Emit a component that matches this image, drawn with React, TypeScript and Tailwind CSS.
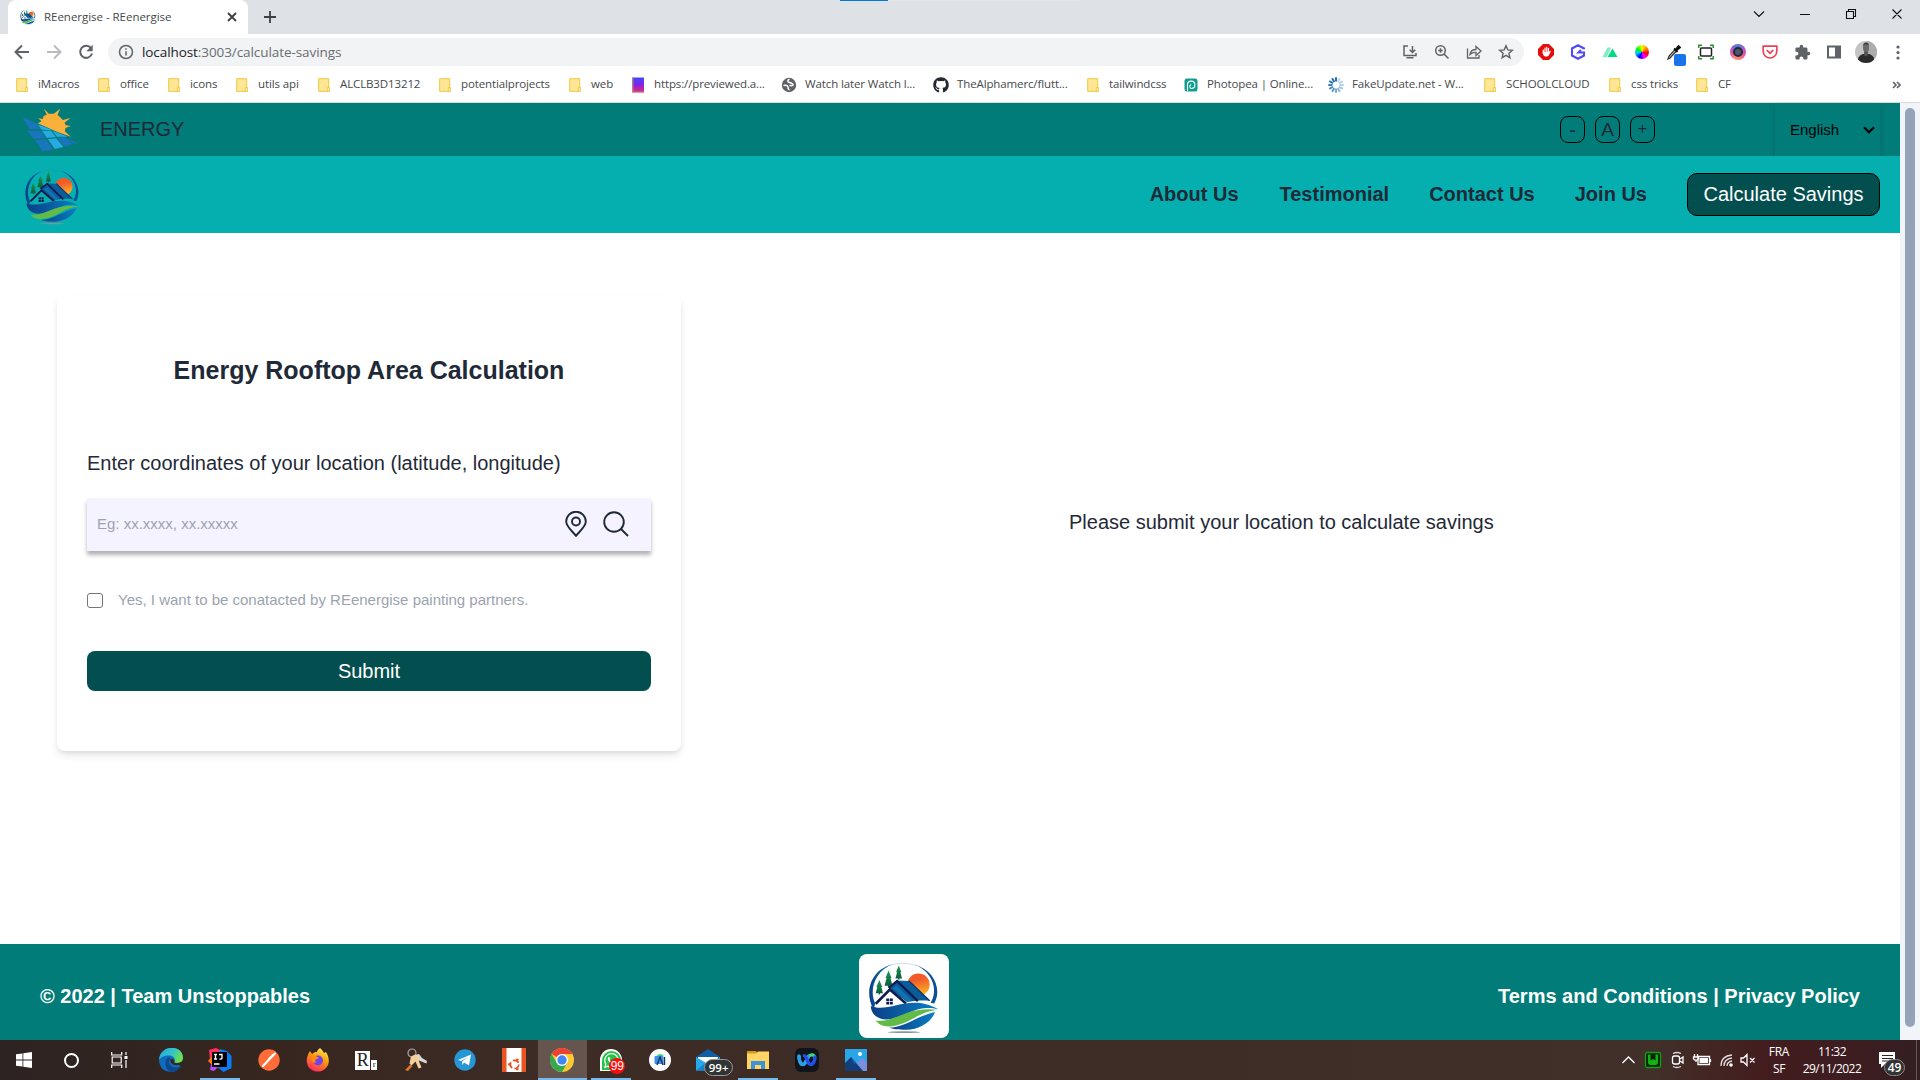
import React from "react";
import { FaGithub, FaWhatsapp } from "react-icons/fa";
import { MdExtension } from "react-icons/md";

const HouseLogo = ({ className }: { className?: string }) => (
  <svg viewBox="90 60 212 222" className={className}>
    <defs>
      <linearGradient id="sunG" x1="0.3" y1="0" x2="0.5" y2="1">
        <stop offset="0.3" stopColor="#f15a29" />
        <stop offset="1" stopColor="#fdb827" />
      </linearGradient>
      <linearGradient id="blueG" x1="0" y1="0" x2="1" y2="0">
        <stop offset="0" stopColor="#0a3f86" />
        <stop offset="1" stopColor="#0b7fc4" />
      </linearGradient>
      <linearGradient id="treeG" x1="0" y1="0" x2="0" y2="1">
        <stop offset="0" stopColor="#1a9a50" />
        <stop offset="1" stopColor="#0a5a3c" />
      </linearGradient>
    </defs>
    <path d="M150 74C175 65 210 65 238 75" fill="none" stroke="#3a7fae" strokeWidth="1.2" opacity=".6" />
    <path d="M160 71C100 84 72 150 103 206L109 190C88 150 108 90 160 71z" fill="url(#blueG)" />
    <path d="M228 71C288 88 312 146 288 189L277 187C302 146 281 92 228 71z" fill="#0b4f96" />
    <circle cx="240" cy="132" r="34" fill="url(#sunG)" />
    <g fill="url(#treeG)">
      <path d="M121 118l-9 21h3l-5 19h9v4h4v-4h9l-5-19h3z" />
      <path d="M149 89l-9 23h3l-6 23h10v5h4v-5h10l-6-23h3z" />
      <path d="M180 74l-8 20h3l-5 19h8v3h4v-3h8l-5-19h3z" />
    </g>
    <path d="M148 141L174 119L212 121L274 181C250 178 225 181 204 184z" fill="#0c5c9a" />
    <path d="M110 190L153 147L202 189" fill="none" stroke="#0d1d52" strokeWidth="8" />
    <path d="M150 142L175 121L238 182" fill="none" stroke="#0d1d52" strokeWidth="7" />
    <path d="M162 141L176 136L220 182L206 184z" fill="#1273b2" />
    <path d="M211 121L274 181" stroke="#0d3468" strokeWidth="4" />
    <path d="M142 174h9v8h-9zM153 174h9v8h-9zM142 184h9v8h-9zM153 184h9v8h-9z" fill="#0d1d52" />
    <path d="M95 197C150 220 215 157 300 207C230 190 200 236 142 238C112 236 96 220 95 197z" fill="url(#blueG)" />
    <path d="M110 241C165 250 208 195 299 209C240 212 214 254 153 259C131 260 118 252 110 241z" fill="#62bb46" />
    <path d="M152 263C202 260 234 228 290 215C282 245 240 270 202 269C178 269 162 267 152 263z" fill="url(#blueG)" />
    <ellipse cx="196" cy="276.500" rx="48" ry="2.500" fill="#8a9399" />
  </svg>
);

const SolarLogo = () => (
  <svg viewBox="66 22 170 132" className="h-[44px] w-[57px]">
    <path
      d="M113 68L124 62L114 53L128 55L130 46L140 42L131 24L146 39L161 39L180 24L172 42L180 50L188 58L211 52L193 66L197 74L212 76L196 82L194 92L212 108L170 93z"
      fill="#fbb03b"
    />
    <g fill="#1b75bc">
      <path d="M67 48L110 69L119 86L88 86z" />
      <path d="M80 90H122L136 112L102 115z" />
      <path d="M105 118L138 116L159 147L127 152z" />
      <path d="M172 112L196 110L219 130L194 138z" />
      <path d="M200 111L234 128L222 129z" />
    </g>
    <g fill="#27aae1">
      <path d="M113 71L158 89L124 87z" />
      <path d="M126 90L152 90L167 109L140 112z" />
      <path d="M143 116L168 113L190 139L164 145z" />
      <path d="M156 91L166 94L204 108L171 108z" />
    </g>
  </svg>
);

const Folder = () => (
  <svg viewBox="0 0 16 16" className="h-4 w-4">
    <path d="M2.700 1.700h10v12.600h-10z" fill="#ffe694" stroke="#edc843" strokeWidth="1" />
    <path d="M11.300 10.500h2.200v4h-2.200z" fill="#ffe694" stroke="#edc843" strokeWidth=".8" />
  </svg>
);

const Globe = () => (
  <svg viewBox="0 0 16 16" className="h-4 w-4">
    <circle cx="8" cy="8" r="7.200" fill="#5f6368" />
    <path d="M8.500 2.200C6 3 6.500 5 8.500 5.500s3.500 1 3.500 2.300-2 .7-3.500.7M2.500 8.500c2-.5 4 0 4.500 1.500s-.5 2.500 1.500 2.800" fill="none" stroke="#fff" strokeWidth="1.500" />
  </svg>
);

const Preview = () => (
  <svg viewBox="0 0 16 16" className="h-4 w-4">
    <defs>
      <linearGradient id="pv" x1="0" y1="0" x2="0" y2="1">
        <stop offset="0" stopColor="#3a4bff" />
        <stop offset=".5" stopColor="#8a1fe0" />
        <stop offset="1" stopColor="#e0307a" />
      </linearGradient>
    </defs>
    <path d="M2 .5h12v15H2z" fill="url(#pv)" />
    <path d="M2 .5h1.500v15H2zM2 14.500h12v1H2z" fill="#c0a070" opacity=".7" />
  </svg>
);

const Pea = () => (
  <svg viewBox="0 0 16 16" className="h-4 w-4">
    <rect x="1.500" y="1.500" width="13" height="13" rx="2.500" fill="#0e9e8e" />
    <path d="M4.500 14V8a3.700 3.700 0 1 1 4 3.500C6.500 11.500 6 8 8.300 7.500" fill="none" stroke="#fff" strokeWidth="1.100" />
  </svg>
);

const Spinner = () => (
  <svg viewBox="0 0 16 16" className="h-4 w-4">
    {[1, 0.25, 0.3, 0.35, 0.4, 0.5, 0.6, 0.7, 0.8, 0.9, 0.95, 1].map((o, i) => (
      <path key={i} d="M8 .3V4.500" stroke="#1769b5" strokeWidth="1.900" opacity={o} transform={`rotate(${i * 30} 8 8)`} />
    ))}
  </svg>
);

const bookmarks: { w: string; t: string; i: React.ReactNode }[] = [
  { w: "w-[82px]", t: "iMacros", i: <Folder /> },
  { w: "w-[70px]", t: "office", i: <Folder /> },
  { w: "w-[68px]", t: "icons", i: <Folder /> },
  { w: "w-[82px]", t: "utils api", i: <Folder /> },
  { w: "w-[121px]", t: "ALCLB3D13212", i: <Folder /> },
  { w: "w-[130px]", t: "potentialprojects", i: <Folder /> },
  { w: "w-[63px]", t: "web", i: <Folder /> },
  { w: "w-[151px]", t: "https://previewed.a...", i: <Preview /> },
  { w: "w-[152px]", t: "Watch later Watch l...", i: <Globe /> },
  { w: "w-[152px]", t: "TheAlphamerc/flutt...", i: <FaGithub className="h-4 w-4 text-[#24292f]" /> },
  { w: "w-[98px]", t: "tailwindcss", i: <Folder /> },
  { w: "w-[145px]", t: "Photopea | Online...", i: <Pea /> },
  { w: "w-[154px]", t: "FakeUpdate.net - W...", i: <Spinner /> },
  { w: "w-[125px]", t: "SCHOOLCLOUD", i: <Folder /> },
  { w: "w-[87px]", t: "css tricks", i: <Folder /> },
  { w: "w-[60px]", t: "CF", i: <Folder /> },
];

const G = "#5f6368";

const TabStrip = () => (
  <div className="relative flex h-[34px] bg-[#dee1e6] pr-[10px] pl-2">
    <div className="relative flex w-60 items-center rounded-t-lg bg-white pr-[11px] pl-3">
      <HouseLogo className="h-4 w-4" />
      <span className="ml-2 flex-1 whitespace-nowrap text-[11.500px] tracking-[-0.03px] text-[#45494d]">REenergise - REenergise</span>
      <svg viewBox="0 0 10 10" className="h-[10px] w-[10px]">
        <path d="M1 1l8 8M9 1l-8 8" stroke="#3c4043" strokeWidth="1.800" />
      </svg>
    </div>
    <svg viewBox="0 0 12 12" className="mt-[11px] ml-[16px] h-3 w-3">
      <path d="M6 0v12M0 6h12" stroke="#3c4043" strokeWidth="1.800" />
    </svg>
    <div className="absolute top-0 left-[840px] flex h-px w-[240px] bg-[#e6e6e6]">
      <div className="w-12 bg-[#0078d7]" />
    </div>
    <svg viewBox="0 0 160 20" className="mt-1 ml-auto h-5 w-[160px]" fill="none" stroke="#111" strokeWidth="1.100">
      <path d="M4 7.500l5 5 5-5M50 10.500h10M96.500 7.500h7v7h-7zM98.500 7.500v-2h7v7h-2M142.500 5.500l9 9M151.500 5.500l-9 9" />
    </svg>
  </div>
);

const Cell = ({ children }: { children: React.ReactNode }) => (
  <div className="flex h-8 w-8 shrink-0 items-center justify-center">{children}</div>
);

const Toolbar = () => (
  <div className="flex h-[36px] items-center bg-white pl-[6px]">
    <Cell>
      <svg viewBox="0 0 16 16" className="h-4 w-4" fill="none" stroke={G} strokeWidth="2">
        <path d="M15 8H2M8 1.500L1.500 8L8 14.500" />
      </svg>
    </Cell>
    <Cell>
      <svg viewBox="0 0 16 16" className="h-4 w-4" fill="none" stroke="#b9bbbe" strokeWidth="2">
        <path d="M1 8h13M8 1.500L14.500 8L8 14.500" />
      </svg>
    </Cell>
    <Cell>
      <svg viewBox="0 0 16 16" className="h-4 w-4">
        <path d="M13 4.200A6 6 0 1 0 14 9.500" fill="none" stroke={G} strokeWidth="2" />
        <path d="M14.700 .8v6.400H8.300z" fill={G} />
      </svg>
    </Cell>
    <div className="ml-[6px] flex h-7 w-[1416px] items-center rounded-full bg-[#f1f3f4] pr-[2px] pl-[10px]">
      <svg viewBox="0 0 16 16" className="h-4 w-4" fill="none" stroke={G} strokeWidth="1.500">
        <circle cx="8" cy="8" r="6.500" />
        <path d="M8 7.200v4.300M8 4.300v1.500" />
      </svg>
      <span className="ml-2 flex-1 text-[13.500px] tracking-[-0.08px] text-[#6a6e73]">
        <span className="text-[#202124]">localhost</span>:3003/calculate-savings
      </span>
      <Cell>
        <svg viewBox="0 0 16 16" className="h-4 w-4" fill="none" stroke={G} strokeWidth="1.500">
          <path d="M6 2H2v9.500h12V9M10.500 2v6M7.700 5.700l2.800 2.800 2.800-2.800M4.500 13.800h7" />
        </svg>
      </Cell>
      <Cell>
        <svg viewBox="0 0 16 16" className="h-4 w-4" fill="none" stroke={G} strokeWidth="1.500">
          <circle cx="6.500" cy="6.500" r="4.800" />
          <path d="M10 10l4.500 4.500M6.500 4.200v4.600M4.200 6.500h4.600" />
        </svg>
      </Cell>
      <Cell>
        <svg viewBox="0 0 16 16" className="h-4 w-4" fill="none" stroke={G} strokeWidth="1.300">
          <path d="M1.500 4.500V14H13v-3M4 10.500c.5-4 3-5 6-5V2.500l5 4.500-5 4.500V8.500C7.500 8.300 5.500 9 4 10.500z" />
        </svg>
      </Cell>
      <Cell>
        <svg viewBox="0 0 16 16" className="h-4 w-4" fill="none" stroke={G} strokeWidth="1.400">
          <path d="M8 1.800l1.800 4.100 4.500.4-3.400 3 1 4.400L8 11.400l-3.900 2.300 1-4.400-3.400-3 4.500-.4z" />
        </svg>
      </Cell>
    </div>
    <div className="ml-[6px] flex items-center">
      <Cell>
        <svg viewBox="0 0 16 16" className="h-4 w-4">
          <path d="M5 0h6l5 5v6l-5 5H5l-5-5V5z" fill="#e40d0d" />
          <path d="M5.300 6v3.500M7 8V4M8.700 8V3.300M10.400 8V4.300" fill="none" stroke="#fff" strokeWidth="1.200" strokeLinecap="round" />
          <path d="M4.700 8h6.300l1-1.500c1 0 .7 1 .3 2l-1.600 3c-.7 1.300-4.300 1.300-5 0C5 10.500 4.700 9 4.700 8z" fill="#fff" />
        </svg>
      </Cell>
      <Cell>
        <svg viewBox="0 0 16 16" className="h-4 w-4" fill="none" stroke="#4f4cf5" strokeWidth="2.100">
          <path d="M14 5.300V4.500L8 1.300L2 4.500v7l6 3.200 6-3.200V8.500H8.500l2.500-2.500" />
        </svg>
      </Cell>
      <Cell>
        <svg viewBox="0 0 16 16" className="h-4 w-4">
          <path d="M.5 13L5.500 3.500H9L5 13z" fill="#80eec0" />
          <path d="M5.500 13L10.500 4.500L15.500 13z" fill="#00dc82" />
        </svg>
      </Cell>
      <Cell>
        <div className="h-[14px] w-[14px] rounded-full bg-[conic-gradient(#ff0,#f80,#f00,#f0f,#00f,#0cf,#0f0,#ff0)]" />
      </Cell>
      <Cell>
        <svg viewBox="0 0 20 22" className="mt-[6px] ml-[4px] h-[22px] w-5">
          <path d="M2 15L3 12L9 5.500L10.500 7L4 14z" fill="#b8d8c0" stroke="#333" strokeWidth="1.200" />
          <path d="M8 4.500L11.500 8M10 5l2.500-3 1.500 1.500-3 2.500z" stroke="#111" strokeWidth="1.800" fill="#111" />
          <rect x="8" y="10" width="12" height="12" rx="2" fill="#1a73e8" />
        </svg>
      </Cell>
      <Cell>
        <svg viewBox="0 0 16 16" className="h-4 w-4" fill="none">
          <path d="M.8 4V1.200H4M12 1.200h3.200V4M.8 12v2.800H4M12 14.800h3.200V12" stroke="#2e8b2e" strokeWidth="1.500" />
          <rect x="2.500" y="4" width="11" height="8" rx="1" stroke="#222" strokeWidth="1.500" />
        </svg>
      </Cell>
      <Cell>
        <div className="flex h-4 w-4 items-center justify-center rounded-full bg-[conic-gradient(#4a7fd0,#a060d0,#e050b0,#ff7070,#ff9080,#f050a0,#9060d8,#4a7fd0)]">
          <div className="h-[10px] w-[10px] rounded-full border-2 border-[#1f2a36] bg-[#4a5a6a]" />
        </div>
      </Cell>
      <Cell>
        <svg viewBox="0 0 16 16" className="h-4 w-4" fill="none" stroke="#ee4056" strokeWidth="1.700">
          <path d="M1.200 2.200h13.600v5a6.800 6.800 0 0 1-13.600 0zM4.700 6l3.300 3.200L11.300 6" />
        </svg>
      </Cell>
      <Cell>
        <MdExtension className="h-[17px] w-[17px] text-[#5f6368]" />
      </Cell>
      <Cell>
        <svg viewBox="0 0 16 16" className="h-4 w-4">
          <path d="M1 1.500h14v13H1zM3 3.500v9h6v-9z" fill={G} fillRule="evenodd" />
        </svg>
      </Cell>
      <Cell>
        <svg viewBox="0 0 22 22" className="h-[22px] w-[22px]">
          <clipPath id="av">
            <circle cx="11" cy="11" r="11" />
          </clipPath>
          <g clipPath="url(#av)">
            <path d="M0 0h22v22H0z" fill="#c4c4c4" />
            <path d="M12 0h10v22H12z" fill="#acacac" />
            <path d="M3 22c-1-6 2-8 5-9h6c4 1 6 4 5 9z" fill="#2b2b2b" />
            <path d="M9 10h4v4l-2 1.500L9 14z" fill="#555" />
            <ellipse cx="11" cy="6.500" rx="3" ry="4.800" fill="#6a6a6a" />
            <path d="M8 5.500C8 0 14 0 14 5.500L13 3.500H9z" fill="#3a3a3a" />
          </g>
        </svg>
      </Cell>
      <Cell>
        <svg viewBox="0 0 4 16" className="h-4 w-1" fill={G}>
          <circle cx="2" cy="3" r="1.600" />
          <circle cx="2" cy="8.500" r="1.600" />
          <circle cx="2" cy="14" r="1.600" />
        </svg>
      </Cell>
    </div>
  </div>
);

const Bookmarks = () => (
  <div className="flex h-[33px] items-center border-b border-[#d9dadd] bg-white pb-[3px] pl-[14px] text-[11.500px] text-[#45494d]">
    {bookmarks.map((b) => (
      <div key={b.t} className={"flex shrink-0 items-center gap-2 " + b.w}>
        <span className="shrink-0">{b.i}</span>
        <span className="mt-[-2px] whitespace-nowrap tracking-[-0.12px]">{b.t}</span>
      </div>
    ))}
    <svg viewBox="0 0 9 8" className="mr-[19px] ml-auto h-2 w-[9px]" fill="none" stroke={G} strokeWidth="1.600">
      <path d="M1 1l3 3-3 3M5 1l3 3-3 3" />
    </svg>
  </div>
);

const sizeBtn = "flex h-[27px] w-[25px] items-center justify-center rounded-lg border border-black leading-none ";

const Page = () => (
  <div className="flex w-[1900px] flex-col bg-white font-['Liberation_Sans',Arial,sans-serif] text-[20px] text-[#1f2937]">
    <div className="flex h-[53px] items-center bg-[#027c79] pr-5 pl-[22px]">
      <SolarLogo />
      <span className="mb-[2px] ml-[21px]">ENERGY</span>
      <div className="ml-auto flex gap-[10px]">
        <div className={sizeBtn + "text-xl"}>-</div>
        <div className={sizeBtn + "pb-px text-[19px]"}>A</div>
        <div className={sizeBtn + "pb-px text-base"}>+</div>
      </div>
      <div className="ml-[120px] flex h-full w-[105px] items-center justify-between pt-px pr-[5px] pl-[15px] text-[15px] text-black shadow-[0_3px_6px_rgba(0,0,0,0.18)]">
        <span>English</span>
        <svg viewBox="0 0 12 8" className="h-2 w-3">
          <path d="M1 1.200l5 5 5-5" fill="none" stroke="#000" strokeWidth="2.200" />
        </svg>
      </div>
    </div>
    <div className="relative flex h-[77px] items-center bg-[#05aeaf] pr-5 pl-[25px]">
      <HouseLogo className="mt-[3px] h-[57px] w-[55px]" />
      <nav className="mb-[2px] ml-auto flex items-center font-bold">
        <span className="mr-[41px]">About Us</span>
        <span className="mr-[40px]">Testimonial</span>
        <span className="mr-[40px]">Contact Us</span>
        <span className="mr-[40px]">Join Us</span>
      </nav>
      <div className="flex h-[43px] w-[193px] items-center justify-center rounded-[10px] border border-black bg-[#034e4e] pb-[2px] text-white">Calculate Savings</div>
    </div>
    <main className="flex h-[711px]">
      <section className="mt-[62px] ml-[57px] flex h-[456px] w-[624px] flex-col rounded-lg px-[30px] shadow-[0_5px_8px_-1px_rgba(0,0,0,0.11),0_2px_5px_-2px_rgba(0,0,0,0.1)]">
        <h1 className="mt-[60px] text-center text-[25px] leading-[30px] font-bold">Energy Rooftop Area Calculation</h1>
        <label className="mt-[63px] text-[20px] leading-[30px]">Enter coordinates of your location (latitude, longitude)</label>
        <div className="mt-[20px] flex h-[53px] items-center bg-[#f5f3ff] pr-[22px] pl-[10px] shadow-[0_4px_4px_rgba(0,0,0,0.3)]">
          <span className="flex-1 text-[15px]">
            <span className="text-[#9ca3af]">Eg: xx.xxxx, xx.xxxxx</span>
          </span>
          <svg viewBox="0 0 22 26" className="mb-[2px] h-[26px] w-[22px]" fill="none" stroke="#1f2937" strokeWidth="1.900">
            <path d="M11 24.800C7 20 1.200 15.500 1.200 10.500a9.800 9.800 0 0 1 19.600 0C20.800 15.500 15 20 11 24.800z" />
            <circle cx="11" cy="10.500" r="4" />
          </svg>
          <svg viewBox="0 0 26 26" className="mb-[2px] ml-[16px] h-[26px] w-[26px]" fill="none" stroke="#1f2937" strokeWidth="1.900">
            <circle cx="11" cy="11" r="9.800" />
            <path d="M18 18l7 7" />
          </svg>
        </div>
        <div className="mt-[39px] flex h-[20px] items-center">
          <div className="h-[15px] w-[16px] rounded-[3px] border border-[#767676] bg-white" />
          <span className="mt-px ml-[15px] text-[15px] text-[#9ca3af]">Yes, I want to be conatacted by REenergise painting partners.</span>
        </div>
        <div className="mt-[41px] flex h-10 items-center justify-center rounded-lg bg-[#034e4e] text-white">Submit</div>
      </section>
      <section className="mt-[277px] ml-[388px] leading-[24px]">Please submit your location to calculate savings</section>
    </main>
    <footer className="flex h-[96px] items-start bg-[#027c79] pt-[10px] pr-10 pl-10 font-bold text-white">
      <span className="mt-[27px] w-[819px]">© 2022 | Team Unstoppables</span>
      <div className="flex h-[84px] w-[90px] items-center justify-center rounded-lg bg-white">
        <HouseLogo className="mt-[2px] h-[73px] w-[70px]" />
      </div>
      <span className="mt-[27px] ml-auto">Terms and Conditions | Privacy Policy</span>
    </footer>
  </div>
);

const Tile = ({ children, line, active }: { children: React.ReactNode; line?: boolean; active?: boolean }) => (
  <div className={"relative flex h-10 w-[48.92px] shrink-0 items-center justify-center " + (active ? "bg-[#66554f]" : "")}>
    {children}
    {line && <div className={"absolute bottom-0 h-[2px] bg-[#76b9ed] " + (active ? "w-full" : "w-10")} />}
  </div>
);

const Taskbar = () => (
  <div className="flex h-10 items-center bg-[linear-gradient(90deg,#2d2322_0%,#36261f_14%,#3d2c26_28%,#3e2d27_60%,#41302a_86%,#431c1e_92%,#3c1d20_97%,#331f22_100%)] font-['Open_Sans',sans-serif] text-white">
    <Tile>
      <svg viewBox="0 0 16 16" className="h-4 w-4" fill="#fff">
        <path d="M0 2.300L6.500 1.400V7.600H0zM7.300 1.300L16 0v7.600H7.300zM0 8.400h6.500v6.200L0 13.700zM7.300 8.400H16V16l-8.700-1.300z" />
      </svg>
    </Tile>
    <Tile>
      <div className="ml-[-3px] h-[15px] w-[15px] rounded-full border-2 border-white" />
    </Tile>
    <Tile>
      <svg viewBox="0 0 17 16" className="ml-[-5px] h-4 w-[17px]" fill="none" stroke="#fff" strokeWidth="1.200">
        <path d="M.7 0v3h10V0M.7 16v-3h10v3M1.200 5h9v6h-9zM15 0v3M15 8v8" />
        <path d="M13.500 5.500h3" strokeWidth="3" />
      </svg>
    </Tile>
    <Tile>
      <svg viewBox="0 0 24 24" className="h-6 w-6">
        <defs>
          <linearGradient id="ed" x1="0" y1="0" x2="1" y2=".4">
            <stop offset="0" stopColor="#1fa7e0" />
            <stop offset=".6" stopColor="#35c3c8" />
            <stop offset="1" stopColor="#6be04f" />
          </linearGradient>
        </defs>
        <path d="M0 12C1-4 24-4 24 10c0 4-3.500 5.500-6.500 5.500l4 2.500C19 22 16 24 12 24 5 24 0 19 0 12z" fill="#0f6cbd" />
        <path d="M0 12C1-4 24-4 24 10c0 5-6 6-9 4.500 2-2 1-7-5-7-5 0-9 2-10 4.500z" fill="url(#ed)" />
        <path d="M10 9c-5 3-5 11 1 15 5 0 9-2 11-6-5 3-11 1-12-3-.5-2 .5-3 1-4z" fill="#10468c" />
        <path d="M12 10.500c-2 2 0 6 4 6.500 3 .5 5-.5 6.500-1.500l1.500-3c-1 2-5 3-9 2 1-1 1-3-3-4z" fill="#36271f" />
      </svg>
    </Tile>
    <Tile line>
      <svg viewBox="0 0 24 24" className="h-6 w-6">
        <path d="M1 2l7-2 8 4-6 10-8-1z" fill="#fe315d" />
        <path d="M0 13l4-5 4 8-2 3z" fill="#f97a12" />
        <path d="M3 16l7 3-4 4-4-1z" fill="#b74af7" />
        <path d="M12 1l7 2 4.500 5v12l-8 4-6-5z" fill="#087cfa" />
        <path d="M4 4h15v15H4z" fill="#000" />
        <path d="M6 6.500h3M7.500 6.500v4.500M6 11h3M11 6.500h3v3.500q0 1.200-2.500 1M6 16h5.500" fill="none" stroke="#fff" strokeWidth="1.300" />
      </svg>
    </Tile>
    <Tile>
      <svg viewBox="0 0 22 22" className="h-[22px] w-[22px]">
        <circle cx="11" cy="11" r="10.700" fill="#ff6c37" />
        <path d="M5 17L13 8.500l4-4M11 10l4-4" stroke="#fff" strokeWidth="2.200" strokeLinecap="round" />
      </svg>
    </Tile>
    <Tile>
      <svg viewBox="0 0 24 24" className="h-6 w-6">
        <defs>
          <linearGradient id="ff" x1=".8" y1="0" x2=".3" y2="1">
            <stop offset="0" stopColor="#fff44f" />
            <stop offset=".45" stopColor="#ff980e" />
            <stop offset="1" stopColor="#ff2560" />
          </linearGradient>
        </defs>
        <path d="M14 0c2 2 3 3 4 5l2-1c3 5 3.500 9 2 13-5 10-19 8-21-2C0 10 2 6 4 3l2 3 3-2 2 0c0-2 2-3 3-4z" fill="url(#ff)" />
        <circle cx="12" cy="12.500" r="5" fill="#7542e5" />
        <path d="M5 9l5-1 3 2-4 2 1 3-4-1z" fill="#ff8a16" />
      </svg>
    </Tile>
    <Tile>
      <div className="flex items-end gap-px pr-[1px]">
        <div className="flex h-[19px] w-[15px] items-center justify-center bg-white font-['Liberation_Serif',serif] text-[18px] leading-none text-[#222]">R</div>
        <div className="flex h-[10px] w-[6px] items-center justify-center bg-white font-['Liberation_Serif',serif] text-[9px] leading-none text-[#222]">r</div>
      </div>
    </Tile>
    <Tile>
      <svg viewBox="0 0 24 24" className="h-6 w-6">
        <circle cx="8" cy="5" r="4" fill="none" stroke="#a9a9a9" strokeWidth="1.200" />
        <path d="M11 7l4-1 3 4 5 3-.5 2.500-4-1.500-5-2z" fill="#d8d8d8" />
        <path d="M7 8.500l4-2 3.500 2 .5 5 2.500 6-3 1-3-7-4 4-2-2z" fill="#f3d09a" />
        <path d="M1 22l5.500-5.500 2 1.500L4 23z" fill="#e07828" />
      </svg>
    </Tile>
    <Tile>
      <svg viewBox="0 0 22 22" className="h-[22px] w-[22px]">
        <circle cx="11" cy="11" r="10.700" fill="#2497d4" />
        <path d="M4 11L17 5.500L15 16.500L10 13.500L8.500 16L8 12.500L14 8L7 12z" fill="#fff" />
      </svg>
    </Tile>
    <Tile>
      <svg viewBox="0 0 24 24" className="h-6 w-6">
        <path d="M0 0h24v24H0z" fill="#e95420" />
        <path d="M4.500 0h15v24h-15z" fill="#fff" />
        <circle cx="12.500" cy="16.500" r="4.200" fill="none" stroke="#e95420" strokeWidth="1.800" strokeDasharray="6.500 2.300" />
        <circle cx="7.500" cy="16.500" r="1.400" fill="#e95420" />
        <circle cx="15.300" cy="12" r="1.400" fill="#e95420" />
        <circle cx="15.300" cy="21" r="1.400" fill="#e95420" />
      </svg>
    </Tile>
    <Tile line active>
      <svg viewBox="0 0 24 24" className="h-6 w-6">
        <circle cx="12" cy="12" r="12" fill="#fcc934" />
        <path d="M12 12L1.600 6A12 12 0 0 1 22.400 6z" fill="#ea4335" />
        <path d="M1.600 6A12 12 0 0 0 12 24L17.200 15 6.800 15z" fill="#34a853" />
        <path d="M12 6h10.400L17 15z" fill="#fcc934" />
        <circle cx="12" cy="12" r="6" fill="#fff" />
        <circle cx="12" cy="12" r="4.700" fill="#4285f4" />
      </svg>
    </Tile>
    <Tile line>
      <div className="relative h-[22px] w-[22px]">
        <div className="flex h-[22px] w-[22px] items-center justify-center rounded-full rounded-bl-none bg-white">
          <div className="flex h-[19px] w-[19px] items-center justify-center rounded-full rounded-bl-[3px] bg-[#25c447]">
            <FaWhatsapp className="h-[17px] w-[17px]" />
          </div>
        </div>
        <div className="absolute top-[9px] left-[9px] flex h-4 w-4 items-center justify-center rounded-full bg-[#fb0d0d] font-['Liberation_Sans',sans-serif] text-[12px] leading-none">99</div>
      </div>
    </Tile>
    <Tile>
      <svg viewBox="0 0 22 22" className="h-[22px] w-[22px]">
        <circle cx="11" cy="11" r="11" fill="#fff" />
        <path d="M7.500 7a4.200 3.600 0 0 1 7.500 0z" fill="#3ddc84" />
        <rect x="5.500" y="7" width="9" height="8" rx="1" fill="#3d8fee" />
        <path d="M8 16l3-8 3 8M15.500 8v8" fill="none" stroke="#123a5a" strokeWidth="1.400" />
      </svg>
    </Tile>
    <Tile>
      <div className="relative mr-[2px] h-6 w-6">
        <svg viewBox="0 0 24 24" className="h-6 w-6">
          <path d="M0 9L12 1l12 8v13H0z" fill="#0f5fa8" />
          <path d="M2 9h20v8H2z" fill="#fff" />
          <path d="M0 9l12 7 12-7v13.500H0z" fill="#28a8ea" />
          <path d="M0 22.500L12 13v9.500z" fill="#1583cf" />
        </svg>
        <div className="absolute top-[11px] left-[8px] flex h-[17px] w-[29px] items-center justify-center rounded-full border border-[#999] bg-[#303436] text-[11.500px] leading-none font-semibold">99+</div>
      </div>
    </Tile>
    <Tile line>
      <svg viewBox="0 0 22 20" className="h-5 w-[22px]">
        <path d="M0 1h9l2 3H0z" fill="#d9960f" />
        <path d="M0 3.500h9l2-2h11V19H0z" fill="#ffd566" />
        <path d="M4 19v-8h14v8h-4v-4H8v4z" fill="#3d92dc" />
      </svg>
    </Tile>
    <Tile>
      <svg viewBox="0 0 24 24" className="h-6 w-6">
        <rect width="24" height="24" rx="6" fill="#111519" />
        <path d="M4 8.500c0 3 1 8 4 8s3-6 6-8.500c2.500-2 5-1 5.500.5" fill="none" stroke="#3edc7a" strokeWidth="3.200" strokeLinecap="round" />
        <path d="M4 8c0 3 1 8.500 4 8.500s3.500-5 5.500-8" fill="none" stroke="#2a9df0" strokeWidth="3.400" strokeLinecap="round" />
        <path d="M9.500 7.800c2.500.5 3 8.700 6 8.700s4.500-4.500 4.500-7.500" fill="none" stroke="#2350e8" strokeWidth="3.400" strokeLinecap="round" />
      </svg>
    </Tile>
    <Tile line>
      <svg viewBox="0 0 22 22" className="h-[22px] w-[22px]">
        <path d="M0 0h22v22H0z" fill="#2aa5e8" />
        <path d="M11 15l6-6 5 5v8H11z" fill="#7a8fe0" />
        <path d="M0 14l6-6 12 14H0z" fill="#123f7c" />
        <path d="M6 8l5 6-2 1z" fill="#1d5aa5" />
        <circle cx="15" cy="5" r="2" fill="#fff" />
      </svg>
    </Tile>
    <svg viewBox="0 0 136 20" className="ml-auto h-5 w-[136px] shrink-0" fill="none" stroke="#fff" strokeWidth="1.300">
      <path d="M2.500 13l6-6 6 6" />
      <rect x="25.500" y="2.500" width="15" height="15" rx="1.500" fill="#052505" stroke="#10a010" />
      <path d="M28 4.500v7.500q0 3 2.500 3h5q2.500 0 2.500-3V4.500h-2.500v6l-2.500-1.500-2.500 1.500v-6z" fill="#12b312" stroke="none" />
      <path d="M53 3.500q4-2 8 0M53 16.500q4 2 8 0" opacity=".8" />
      <rect x="52.500" y="6" width="7" height="8" rx="2" />
      <path d="M60 9l3-2v6l-3-2" />
      <path d="M78 6.500h11.500v8H78zM90.500 9v3" />
      <path d="M79.500 8h8.500v5h-8.500z" fill="#fff" stroke="none" />
      <path d="M74.500 4v3M77.500 4v3M73.500 7h5v2q-2.500 2.500-5 0zM76 10v2" />
      <path d="M101 16q0-10 11-11M104 16q0-7 8-8M107 16q0-4 5-5" opacity=".85" />
      <circle cx="111" cy="15" r="1.800" fill="#fff" stroke="none" />
      <path d="M121 8h2.500l3.500-3.500v11L123.500 12H121zM130 8l4.500 4.500M134.500 8L130 12.500" />
    </svg>
    <div className="ml-[3px] flex w-[40px] shrink-0 flex-col items-center text-[12px] leading-[17px] tracking-[-0.3px]">
      <span>FRA</span>
      <span>SF</span>
    </div>
    <div className="flex w-[66px] shrink-0 flex-col items-center text-[12px] leading-[17px] tracking-[-0.5px]">
      <span>11:32</span>
      <span>29/11/2022</span>
    </div>
    <div className="relative ml-[13px] h-10 w-[38px] shrink-0">
      <svg viewBox="0 0 18 18" className="mt-[11px] h-[18px] w-[18px]">
        <path d="M1 1h16v12H7l-4 4v-4H1z" fill="#fff" />
        <path d="M4 4.500h11M4 7.500h11M4 10h7" stroke="#3a2022" strokeWidth="1.100" />
      </svg>
      <div className="absolute top-[19px] left-[6px] flex h-[17px] w-[21px] items-center justify-center rounded-full border border-[#888] bg-[#333] text-[12px] leading-none font-semibold">49</div>
    </div>
    <div className="mr-[3px] h-full w-px shrink-0 bg-[#6a5556]" />
  </div>
);

export default function App() {
  return (
    <div className="flex h-[1080px] w-[1920px] flex-col overflow-hidden bg-white font-['Open_Sans',sans-serif]">
      <TabStrip />
      <Toolbar />
      <Bookmarks />
      <div className="flex h-[937px]">
        <Page />
        <div className="w-5 bg-[#f1f5f9] pt-[5px] pl-[5px]">
          <div className="h-[919px] w-[10px] rounded-full bg-[#94a3b8]" />
        </div>
      </div>
      <Taskbar />
    </div>
  );
}
